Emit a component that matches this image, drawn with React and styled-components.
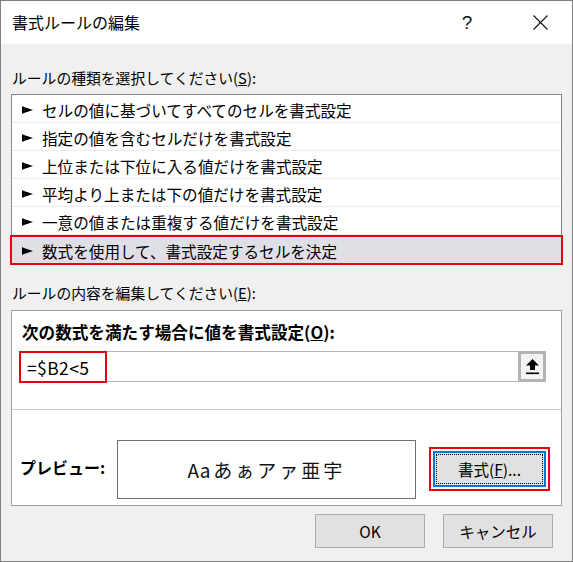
import React from "react";
import styled, { createGlobalStyle } from "styled-components";

const GlobalStyle = createGlobalStyle`
  body {
    margin: 0;
    background: #ffffff;
    font-family: "Noto Sans CJK JP", "Noto Sans", sans-serif;
    color: #000;
  }
`;

const Window = styled.div`
  box-sizing: border-box;
  width: 573px;
  height: 562px;
  border: 1px solid #7f7f7f;
  background: #f0f0f0;
  display: flex;
  flex-direction: column;
`;

const TitleBar = styled.div`
  height: 43px;
  background: #ffffff;
  display: flex;
  align-items: center;
`;

const Title = styled.div`
  flex: 1;
  padding-left: 11px;
  font-size: 16px;
  line-height: 20px;
  padding-bottom: 1px;
`;

const TitleButton = styled.div`
  width: 46px;
  height: 43px;
  display: flex;
  align-items: center;
  justify-content: center;
  margin-right: ${({ $gap }) => $gap}px;
  font-family: "Liberation Sans", sans-serif;
  font-size: 19px;
  color: #111;
`;

const Body = styled.div`
  flex: 1;
  display: flex;
  flex-direction: column;
  padding: 0 10px;
`;

const Label = styled.div`
  font-size: 14.8px;
  line-height: 20px;
  margin-top: ${({ $top }) => $top}px;
  margin-left: 1px;
  white-space: nowrap;
`;

const RuleList = styled.div`
  margin-top: 6px;
  border: 1px solid #828790;
  background: #ffffff;
  display: flex;
  flex-direction: column;
`;

const RuleRow = styled.div`
  box-sizing: border-box;
  height: ${({ $selected }) => ($selected ? 30 : 28)}px;
  display: flex;
  align-items: center;
  gap: 9px;
  padding: 2px 0 0 10px;
  font-size: 15.6px;
  white-space: nowrap;
  border-bottom: ${({ $selected }) => ($selected ? "2px solid #e60012" : "1px solid #ececec")};
  border-top: ${({ $selected }) => ($selected ? "2px solid #e60012" : "none")};
  border-left: ${({ $selected }) => ($selected ? "2px solid #e60012" : "none")};
  border-right: ${({ $selected }) => ($selected ? "2px solid #e60012" : "none")};
  background: ${({ $selected }) => ($selected ? "#dfdfe6" : "#ffffff")};
  margin: ${({ $selected }) => ($selected ? "0 -2px -2px" : "0")};
`;

const Group = styled.div`
  margin-top: 7px;
  height: 196px;
  box-sizing: border-box;
  border: 1px solid #a0a0a0;
  background: #ffffff;
  display: flex;
  flex-direction: column;
`;

const FormulaSection = styled.div`
  padding: 10px 15px 0 7px;
  height: 99px;
  box-sizing: border-box;
  border-bottom: 1px solid #cbcbcb;
`;

const BoldLabel = styled.div`
  font-size: 16.6px;
  font-weight: 700;
  line-height: 22px;
  margin-left: 3px;
  white-space: nowrap;
`;

const InputRow = styled.div`
  margin-top: 8px;
  height: 31px;
  display: flex;
`;

const FormulaInput = styled.div`
  flex: 1;
  box-sizing: border-box;
  border-top: 1px solid #b5b5b5;
  border-bottom: 1px solid #b5b5b5;
  display: flex;
  align-items: center;
`;

const FormulaMark = styled.span`
  box-sizing: border-box;
  height: 32px;
  width: 88px;
  margin: -1px 0 -2px;
  border: 2px solid #e60012;
  display: flex;
  align-items: center;
  padding-left: 6px;
  font-size: 17.5px;
  letter-spacing: 0.4px;
`;

const CollapseButton = styled.div`
  box-sizing: border-box;
  width: 28px;
  height: 31px;
  border: 3px solid #b4b4b4;
  background: #f4f4f4;
  display: flex;
  align-items: center;
  justify-content: center;
`;

const PreviewSection = styled.div`
  flex: 1;
  display: flex;
  align-items: center;
  padding: 29px 0 6px 8px;
`;

const PreviewLabel = styled.div`
  width: 97px;
  font-size: 16px;
  font-weight: 700;
  white-space: nowrap;
  margin-top: -5px;
`;

const PreviewBox = styled.div`
  box-sizing: border-box;
  width: 299px;
  height: 59px;
  border: 1px solid #707070;
  display: flex;
  align-items: center;
  justify-content: center;
  font-size: 19px;
  letter-spacing: 3px;
  color: #111;
`;

const Latin = styled.span`
  letter-spacing: 0;
  margin-right: 3px;
`;

const Button = styled.div`
  box-sizing: border-box;
  width: ${({ $w }) => $w}px;
  height: ${({ $h }) => $h}px;
  background: #e1e1e1;
  border: ${({ $focus }) => ($focus ? "2px solid #0078d7" : "1px solid #adadad")};
  outline: ${({ $mark }) => ($mark ? "2px solid #e60012" : "none")};
  outline-offset: 2px;
  display: flex;
  align-items: center;
  justify-content: center;
  font-size: 15.5px;
  position: relative;
  white-space: nowrap;
`;

const FocusRing = styled.span`
  position: absolute;
  inset: 1px;
  border: 1px dotted #000;
  pointer-events: none;
`;

const FormatButton = styled(Button)`
  margin-left: 17px;
`;

const Footer = styled.div`
  margin-top: 8px;
  display: flex;
  justify-content: flex-end;
  gap: 18px;
  padding-right: 9px;
`;

const Arrow = () => (
  <svg width="11" height="8" viewBox="0 0 11 8">
    <polygon points="0,0 2,1 11,4 2,7 0,8" fill="#000" />
  </svg>
);

const CloseIcon = () => (
  <svg width="15" height="15" viewBox="0 0 15 15">
    <path d="M0.5 0.5 L14.5 14.5 M14.5 0.5 L0.5 14.5" stroke="#111" strokeWidth="1.1" />
  </svg>
);

const UploadIcon = () => (
  <svg width="13" height="16" viewBox="0 0 13 16">
    <polygon points="6.5,0 13,6.5 9,6.5 9,11 4,11 4,6.5 0,6.5" fill="#000" />
    <rect x="0" y="13.5" width="13" height="1.6" fill="#000" />
  </svg>
);

const rules = [
  "セルの値に基づいてすべてのセルを書式設定",
  "指定の値を含むセルだけを書式設定",
  "上位または下位に入る値だけを書式設定",
  "平均より上または下の値だけを書式設定",
  "一意の値または重複する値だけを書式設定",
  "数式を使用して、書式設定するセルを決定",
];

export default function App() {
  return (
    <>
      <GlobalStyle />
      <Window>
        <TitleBar>
          <Title>書式ルールの編集</Title>
          <TitleButton $gap={27}>?</TitleButton>
          <TitleButton $gap={9}>
            <CloseIcon />
          </TitleButton>
        </TitleBar>
        <Body>
          <Label $top={24}>
            ルールの種類を選択してください(<u>S</u>):
          </Label>
          <RuleList>
            {rules.map((rule, i) => (
              <RuleRow key={rule} $selected={i === rules.length - 1}>
                <Arrow />
                {rule}
              </RuleRow>
            ))}
          </RuleList>
          <Label $top={19}>
            ルールの内容を編集してください(<u>E</u>):
          </Label>
          <Group>
            <FormulaSection>
              <BoldLabel>
                次の数式を満たす場合に値を書式設定(<u>O</u>):
              </BoldLabel>
              <InputRow>
                <FormulaInput>
                  <FormulaMark>=$B2&lt;5</FormulaMark>
                </FormulaInput>
                <CollapseButton>
                  <UploadIcon />
                </CollapseButton>
              </InputRow>
            </FormulaSection>
            <PreviewSection>
              <PreviewLabel>プレビュー:</PreviewLabel>
              <PreviewBox>
                <Latin>Aa</Latin>あぁアァ亜宇
              </PreviewBox>
              <FormatButton $w={113} $h={36} $focus $mark>
                <FocusRing />
                書式(<u>F</u>)...
              </FormatButton>
            </PreviewSection>
          </Group>
          <Footer>
            <Button $w={110} $h={34}>OK</Button>
            <Button $w={110} $h={34}>キャンセル</Button>
          </Footer>
        </Body>
      </Window>
    </>
  );
}
